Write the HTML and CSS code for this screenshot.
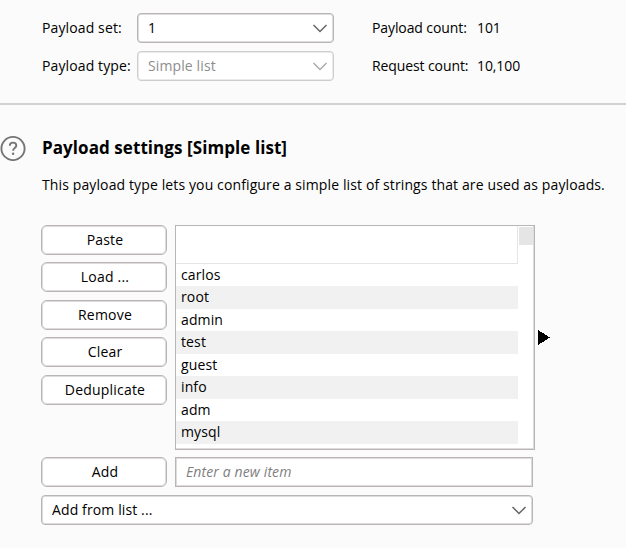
FILE: index.html
```html
<!DOCTYPE html>
<html lang="en">
<head>
<meta charset="utf-8">
<title>Payload settings</title>
<link rel="stylesheet" href="styles.css">
</head>
<body>
<section class="summary">
  <span class="label">Payload set:</span>
  <div class="select"><span>1</span><svg class="chevron" viewBox="0 0 16 10"><path d="M1.5 2 8 8.500l6.500-6.500"/></svg></div>
  <span class="count-label">Payload count:</span><span class="value">101</span>
  <span class="label">Payload type:</span>
  <div class="select disabled"><span>Simple list</span><svg class="chevron" viewBox="0 0 16 10"><path d="M1.5 2 8 8.500l6.500-6.500"/></svg></div>
  <span class="count-label">Request count:</span><span class="value">10,100</span>
</section>
<section class="settings">
  <header class="heading">
    <svg class="help" viewBox="0 0 26 26"><circle cx="13" cy="13.500" r="11.6"/><path d="M9.8 10.800c0-2 1.400-3.200 3.300-3.200 1.900 0 3.200 1.200 3.200 2.900 0 2.600-3.200 2.500-3.200 5.200"/><circle class="dot" cx="13.100" cy="18.800" r="1.200"/></svg>
    <h1>Payload settings [Simple list]</h1>
  </header>
  <p class="description">This payload type lets you configure a simple list of strings that are used as payloads.</p>
  <div class="editor">
    <div class="buttons">
      <button>Paste</button>
      <button>Load ...</button>
      <button>Remove</button>
      <button>Clear</button>
      <button>Deduplicate</button>
    </div>
    <div class="list">
      <div class="table">
        <div class="table-head"></div>
        <div class="row">carlos</div>
        <div class="row">root</div>
        <div class="row">admin</div>
        <div class="row">test</div>
        <div class="row">guest</div>
        <div class="row">info</div>
        <div class="row">adm</div>
        <div class="row">mysql</div>
      </div>
      <div class="scrollbar"><div class="thumb"></div></div>
    </div>
    <svg class="marker" viewBox="0 0 12 15" shape-rendering="crispEdges"><path d="M0 0 12 7.500 0 15z"/></svg>
  </div>
  <div class="add-row">
    <button>Add</button>
    <div class="input">Enter a new item</div>
  </div>
  <div class="select from-list"><span>Add from list ...</span><svg class="chevron" viewBox="0 0 16 10"><path d="M1.5 2 8 8.500l6.500-6.500"/></svg></div>
</section>
</body>
</html>
```
FILE: styles.css
```css
* { box-sizing: border-box; }
body {
  margin: 0;
  height: 548px;
  overflow: hidden;
  background: #fbfbfb;
  color: #000;
  font: 14px/20px "Open Sans", "Noto Sans", sans-serif;
  letter-spacing: 0.12px;
  white-space: nowrap;
}
.summary {
  height: 105px;
  padding: 13px 0 0 42px;
  border-bottom: 2px solid #d2d2d2;
  display: grid;
  grid-template-columns: 95px 197px 143px 100px;
  grid-template-rows: 30px 30px;
  row-gap: 8px;
  align-items: center;
}
.count-label, .value { letter-spacing: -0.1px; }
.count-label { padding-left: 38px; }
.select, .input, button {
  height: 30px;
  border: 1px solid #b9b4b6;
  box-shadow: inset 0 0 0 1px #dedbdc;
  background: #fff;
}
.select {
  display: flex;
  align-items: center;
  justify-content: space-between;
  border-radius: 4px;
  padding: 0 5px 0 10px;
}
.disabled { border-color: #cfcdce; box-shadow: inset 0 0 0 1px #ebeaea; color: #8d8d8d; }
.chevron { width: 16px; height: 10px; fill: none; stroke: #666; stroke-width: 1.5; }
.disabled .chevron { stroke: #aaa; }
.settings { padding-left: 41px; }
.heading { display: flex; align-items: center; margin: 30px 0 0 -41px; height: 26px; }
.help { width: 26px; height: 26px; fill: none; stroke: #757575; stroke-width: 1.9; }
.help .dot { fill: #757575; stroke: none; }
h1 { margin: 0 0 0 16px; font-size: 17px; line-height: 24px; font-weight: 700; letter-spacing: 0.07px; }
.description { margin: 14px 0 30px 1px; }
.editor { display: flex; height: 225px; }
.buttons { width: 126px; display: flex; flex-direction: column; gap: 7.450px; }
button {
  width: 126px;
  flex: none;
  padding: 0 0 0 2px;
  border-radius: 6px;
  font: inherit;
  letter-spacing: 0.2px;
  color: inherit;
}
.list {
  display: flex;
  width: 360px;
  margin-left: 8px;
  border: 1px solid #b9b4b6;
  box-shadow: inset -1px -1px 0 #dedbdc;
  background: #fff;
}
.table { width: 342px; }
.table-head { height: 37.500px; border-right: 1px solid #e5e5e5; border-bottom: 1px solid #e5e5e5; }
.row { height: 22.500px; line-height: 22px; padding-left: 5px; }
.row:nth-child(odd) { background: #f1f1f1; }
.scrollbar { width: 15px; }
.thumb { height: 18px; margin: 1px 0 0 1px; background: #e5e5e5; }
.marker { width: 12px; height: 15px; margin: 105px 0 0 3px; }
.add-row { display: flex; gap: 8px; margin-top: 7px; }
.input { width: 358px; padding: 4px 10px; font-style: italic; color: #808080; }
.from-list { width: 492px; margin-top: 8px; }
```
